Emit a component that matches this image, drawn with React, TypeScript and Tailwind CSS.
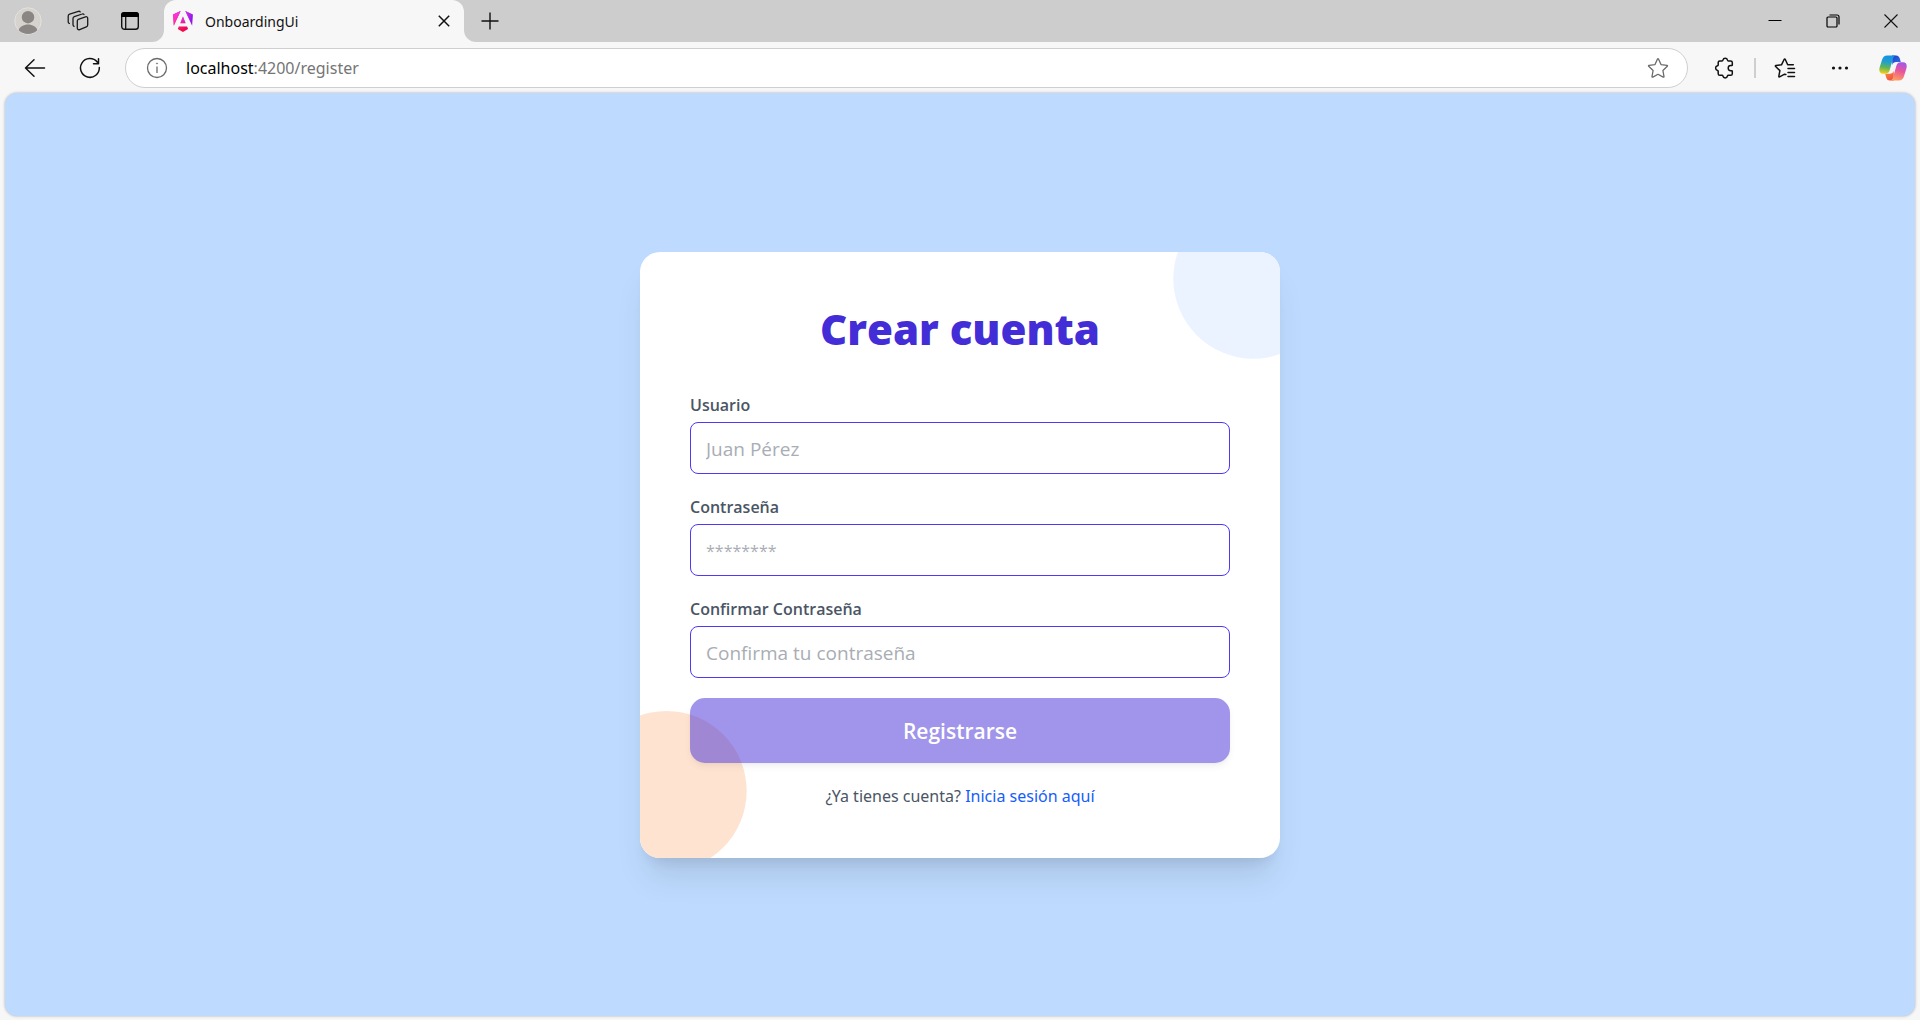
import type { ReactNode } from "react";

function ProfileIcon() {
  return (
    <svg width="28" height="28" viewBox="0 0 28 28">
      <defs>
        <clipPath id="avatar">
          <circle cx="14" cy="14" r="13" />
        </clipPath>
      </defs>
      <circle cx="14" cy="14" r="13.2" fill="#d6d3cf" stroke="#e4e2de" />
      <circle cx="14" cy="10.2" r="6.2" fill="#8a8684" />
      <path d="M4 24.5c1.5-5 5.500-7 10-7s8.500 2 10 7c-2.500 2.200-6 3-10 3s-7.500-.8-10-3Z" fill="#8a8684" clipPath="url(#avatar)" />
    </svg>
  );
}

function WorkspacesIcon() {
  return (
    <svg width="22" height="22" viewBox="0 0 22 22" fill="none" stroke="#1b1b1b" strokeWidth="1.300" strokeLinejoin="round" strokeLinecap="round">
      <path d="M11.300 9.300l7.200-2.500c1.200-.4 2.200.3 2.200 1.500v6.700c0 .9-.5 1.600-1.400 1.900l-6.600 2.700c-1.300.5-2.400-.2-2.400-1.500v-7c0-.9.300-1.500 1-1.800Z" />
      <path d="M17 4.500c-.4-.6-1-.8-1.800-.5L7.300 6.700c-.9.300-1.300.9-1.300 1.800v6.300c0 .8.300 1.300 1 1.600" />
      <path d="M13.200 1.900c-.4-.6-1-.8-1.800-.6L2.600 4.100c-.9.300-1.400 1-1.400 1.900v5.700c0 .9.400 1.500 1.200 1.800" />
    </svg>
  );
}

function TabActionsIcon() {
  return (
    <svg width="20" height="20" viewBox="0 0 20 20" fill="none">
      <rect x="1.700" y="1.700" width="16.600" height="16.600" rx="2.800" stroke="#111" strokeWidth="1.400" />
      <path d="M1 6V4a3 3 0 0 1 3-3h12a3 3 0 0 1 3 3v2Z" fill="#000" />
      <path d="M5.700 6v12" stroke="#111" strokeWidth="1.300" />
    </svg>
  );
}

function AngularIcon() {
  return (
    <svg width="20" height="21" viewBox="0 0 223 236">
      <defs>
        <linearGradient id="ngA" x1="49" y1="226" x2="218" y2="68" gradientUnits="userSpaceOnUse">
          <stop stopColor="#E40035" />
          <stop offset=".24" stopColor="#F60A48" />
          <stop offset=".35" stopColor="#F20755" />
          <stop offset=".49" stopColor="#DC087D" />
          <stop offset=".75" stopColor="#9717E7" />
          <stop offset="1" stopColor="#6C00F5" />
        </linearGradient>
        <linearGradient id="ngB" x1="41" y1="28" x2="156" y2="175" gradientUnits="userSpaceOnUse">
          <stop stopColor="#FF31D9" />
          <stop offset="1" stopColor="#FF5BE1" stopOpacity="0" />
        </linearGradient>
      </defs>
      {["url(#ngA)", "url(#ngB)"].map((fill) => (
        <path
          key={fill}
          fill={fill}
          d="m222.077 39.192-8.019 125.923L137.387 0l84.690 39.192Zm-53.105 162.825-57.933 33.056-57.934-33.056 11.783-28.556h92.301l11.783 28.556ZM111.039 62.675l30.357 73.803H80.681l30.358-73.803ZM7.937 165.115 0 39.192 84.690 0 7.937 165.115Z"
        />
      ))}
    </svg>
  );
}

function StarOutline() {
  return (
    <svg width="22" height="22" viewBox="0 0 22 22" fill="none" stroke="#6b6b6b" strokeWidth="1.300" strokeLinejoin="round">
      <path d="M10.500 2q.5-.8 1 0l2.500 5.600 6 .8q.9.200.300.900l-4.400 4.200 1.100 6.100q0 .8-.8.500L11 17.300l-5.200 2.800q-.8.300-.8-.5l1.100-6.100L1.700 9.300q-.6-.7.300-.9l6-.8Z" />
    </svg>
  );
}

function PuzzleIcon() {
  return (
    <svg width="22" height="22" viewBox="0 0 22 22" fill="none" stroke="#111" strokeWidth="1.500" strokeLinejoin="round">
      <path d="M5.800 3.900h2.200c.5 0 .8-.3.900-.8.300-1.200 1.200-1.900 2.300-1.900s2 .7 2.300 1.900c.1.500.4.8.9.800h2.300c1 0 1.600.7 1.600 1.600v2.400q0 .6-.6.600h-1c-1.500 0-2.500 1.100-2.500 2.600s1 2.600 2.500 2.600h1q.6 0 .6.600v2.400c0 1-.7 1.600-1.600 1.600h-2.300c-.5 0-.8.300-.9.700-.3 1.200-1.200 1.900-2.300 1.900s-2-.7-2.300-1.900c-.1-.4-.4-.7-.9-.7H5.800c-1 0-1.600-.7-1.600-1.600v-2.400c0-.5-.3-.8-.7-.9-1.200-.3-1.900-1.200-1.900-2.300s.7-2 1.900-2.300c.4-.1.700-.4.700-.9V5.500c0-.9.600-1.600 1.600-1.600Z" />
    </svg>
  );
}

function FavoritesIcon() {
  return (
    <svg width="22" height="22" viewBox="0 0 22 22" fill="none" stroke="#111" strokeWidth="1.500" strokeLinejoin="round" strokeLinecap="round">
      <path d="M19.300 7.700h-5.600L11.300 2.500q-.6-1-1.200 0L7.500 7.800l-5.600.8q-.9.200-.3.900l4.300 4.100-1.100 5.700q0 .9.800.6l5-2.700 1.300.2" />
      <path d="M14 11.500h6.500M14 15.500h6.500M14 19.500h6.500" />
    </svg>
  );
}

function CopilotIcon() {
  return (
    <svg width="28" height="26" viewBox="0 0 28 26">
      <defs>
        <linearGradient id="cpBlue" x1="8" y1="0" x2="5" y2="19" gradientUnits="userSpaceOnUse">
          <stop stopColor="#1490e8" />
          <stop offset=".35" stopColor="#1f9fd0" />
          <stop offset=".65" stopColor="#5fb55a" />
          <stop offset="1" stopColor="#ffd012" />
        </linearGradient>
        <linearGradient id="cpPink" x1="23" y1="7" x2="17" y2="26" gradientUnits="userSpaceOnUse">
          <stop stopColor="#a056f0" />
          <stop offset=".45" stopColor="#e8559b" />
          <stop offset="1" stopColor="#ffa45a" />
        </linearGradient>
        <linearGradient id="cpNavy" x1="14" y1="0" x2="21" y2="8" gradientUnits="userSpaceOnUse">
          <stop stopColor="#1d3fc4" />
          <stop offset="1" stopColor="#2f6fe8" />
        </linearGradient>
        <linearGradient id="cpRed" x1="8" y1="17" x2="13" y2="26" gradientUnits="userSpaceOnUse">
          <stop stopColor="#f7883a" />
          <stop offset="1" stopColor="#ee4a4a" />
        </linearGradient>
      </defs>
      <path d="M13 .5h4c2.300 0 3.300 1.300 3.900 3.300l.9 3.200h-4.600c-2 0-3.200.8-3.900 3L13 .5Z" fill="url(#cpNavy)" />
      <path d="M15 25.500h-4c-2.300 0-3.300-1.300-3.900-3.300L6.200 18.700h4.600c2 0 3.200-.8 3.900-3l.3 9.800Z" fill="url(#cpRed)" />
      <path d="M8.500.5h8.200c-1.600.4-2.400 1.800-3 4l-3 10.500c-.7 2.500-1.800 3.800-4.300 3.800H4c-3.300 0-4.300-2.800-3.400-6.200L2.800 5.600C3.700 2.300 5.200.5 8.500.5Z" fill="url(#cpBlue)" />
      <path d="M19.500 25.500h-8.200c1.600-.4 2.400-1.800 3-4l3-10.500c.7-2.500 1.800-3.800 4.300-3.800H24c3.300 0 4.300 2.800 3.400 6.200l-2.200 7c-.9 3.300-2.400 5.100-5.700 5.100Z" fill="url(#cpPink)" />
    </svg>
  );
}

function IconButton({ label, className, children }: { label: string; className: string; children: ReactNode }) {
  return (
    <button type="button" aria-label={label} className={`flex shrink-0 items-center justify-center ${className}`}>
      {children}
    </button>
  );
}

function TabStrip() {
  return (
    <div className="flex h-[42px] text-[#111]">
      <div className="flex w-[164px] shrink-0 items-center rounded-br-xl bg-[#cdcdcd] pl-[14px]">
        <IconButton label="Perfil" className="w-7">
          <ProfileIcon />
        </IconButton>
        <IconButton label="Espacios de trabajo" className="ml-6 w-6">
          <WorkspacesIcon />
        </IconButton>
        <IconButton label="Acciones de pestañas" className="ml-7 w-6">
          <TabActionsIcon />
        </IconButton>
      </div>
      <div className="w-[300px] shrink-0 bg-[#cdcdcd]">
        <div className="flex h-full items-center rounded-t-xl bg-[#f7f7f7] pr-3 pl-[9px]">
          <AngularIcon />
          <span className="ml-3 flex-1 font-['Noto_Sans','Open_Sans',sans-serif] text-[14px]">OnboardingUi</span>
          <IconButton label="Cerrar pestaña" className="size-4">
            <svg width="12" height="12" viewBox="0 0 12 12" stroke="#111" strokeWidth="1.500">
              <path d="M.8.8l10.400 10.400M11.200.8.8 11.200" />
            </svg>
          </IconButton>
        </div>
      </div>
      <div className="flex flex-1 items-center rounded-bl-xl bg-[#cdcdcd]">
        <IconButton label="Nueva pestaña" className="ml-4 w-5">
          <svg width="18" height="18" viewBox="0 0 18 18" stroke="#111" strokeWidth="1.400">
            <path d="M9 .5v17M.5 9h17" />
          </svg>
        </IconButton>
        <div className="ml-auto flex h-full">
          <IconButton label="Minimizar" className="w-[58px]">
            <svg width="14" height="14" viewBox="0 0 14 14" stroke="#000">
              <path d="M.5 6.500h13" />
            </svg>
          </IconButton>
          <IconButton label="Restaurar" className="w-[58px]">
            <svg width="14" height="14" viewBox="0 0 14 14" fill="none" stroke="#000" strokeWidth="1.200">
              <rect x="1" y="3" width="10" height="10" rx="1" />
              <path d="M3.500 1h7.500a2 2 0 0 1 2 2v7.500" />
            </svg>
          </IconButton>
          <IconButton label="Cerrar" className="w-[58px]">
            <svg width="14" height="14" viewBox="0 0 14 14" stroke="#111" strokeWidth="1.100">
              <path d="M.5.5l13 13M13.500.5l-13 13" />
            </svg>
          </IconButton>
        </div>
      </div>
    </div>
  );
}

function Toolbar() {
  return (
    <div className="flex h-[51px] items-center pr-[13px] pl-6">
      <IconButton label="Atrás" className="w-[22px]">
        <svg width="22" height="20" viewBox="0 0 22 20" fill="none" stroke="#111" strokeWidth="1.500" strokeLinecap="round" strokeLinejoin="round">
          <path d="M20.500 10H1.500M10 1.800 1.500 10l8.500 8.200" />
        </svg>
      </IconButton>
      <IconButton label="Actualizar" className="ml-[33px] w-[22px]">
        <svg width="22" height="22" viewBox="0 0 22 22" fill="none" stroke="#111" strokeWidth="1.500" strokeLinecap="round" strokeLinejoin="round">
          <path d="M20.300 10.500a9.400 9.400 0 1 1-2.100-5.500l1.100 1.400M19.500 1.700v5h-5" />
        </svg>
      </IconButton>
      <div className="ml-6 flex h-10 flex-1 items-center rounded-full border border-[#cfcfcf] bg-white pr-[18px] pl-5">
        <IconButton label="Información del sitio" className="w-[22px]">
          <svg width="22" height="22" viewBox="0 0 22 22" fill="none" stroke="#6b6b6b" strokeWidth="1.300">
            <circle cx="11" cy="11" r="9.500" />
            <path d="M11 9.500v6.500" />
            <circle cx="11" cy="6.500" r=".6" fill="#6b6b6b" strokeWidth=".6" />
          </svg>
        </IconButton>
        <span className="ml-[18px] flex-1 font-['Noto_Sans','Open_Sans',sans-serif] text-[16px] text-[#757575]">
          <span className="text-black">localhost</span>:4200/register
        </span>
        <IconButton label="Agregar a favoritos" className="w-[22px]">
          <StarOutline />
        </IconButton>
      </div>
      <IconButton label="Extensiones" className="ml-[26px] w-[22px]">
        <PuzzleIcon />
      </IconButton>
      <span className="mx-[18px] h-5 w-0.5 bg-[#cfcfcf]" />
      <IconButton label="Favoritos" className="w-[22px]">
        <FavoritesIcon />
      </IconButton>
      <IconButton label="Configuración y más" className="ml-[33px] w-[22px]">
        <svg width="18" height="4" viewBox="0 0 18 4" fill="#111">
          <circle cx="2.500" cy="2" r="1.600" />
          <circle cx="9" cy="2" r="1.600" />
          <circle cx="15.500" cy="2" r="1.600" />
        </svg>
      </IconButton>
      <IconButton label="Copilot" className="ml-7 w-7">
        <CopilotIcon />
      </IconButton>
    </div>
  );
}

type FieldProps = { id: string; label: string; type: string; placeholder: string; placeholderSize?: string };

function Field({ id, label, type, placeholder, placeholderSize = "text-[19px]" }: FieldProps) {
  return (
    <div className="flex flex-col gap-[3px]">
      <label htmlFor={id} className="text-[16px] leading-[27px] font-semibold text-gray-600">
        {label}
      </label>
      <input
        id={id}
        type={type}
        placeholder={placeholder}
        className={`h-[52px] w-full rounded-lg border border-indigo-600 px-[15px] pt-0.5 outline-none placeholder:text-[#a9adb4] ${placeholderSize}`}
      />
    </div>
  );
}

function RegisterCard() {
  return (
    <div className="relative w-full max-w-[640px] overflow-hidden rounded-[20px] bg-white px-[50px] pt-[50px] pb-12 shadow-[0_25px_31px_-6px_rgb(0_0_0/0.1),0_10px_13px_-8px_rgb(0_0_0/0.1)]">
      <div className="absolute top-0 right-0 size-40 translate-x-1/3 -translate-y-1/3 rounded-full bg-[#eaf3ff]" />
      <div className="absolute -bottom-[13px] left-0 size-40 -translate-x-1/3 rounded-full bg-[#ffe3d1]" />
      <h1 className="relative mb-9 text-center text-[42px] leading-[54px] font-extrabold text-indigo-700">Crear cuenta</h1>
      <form className="relative flex flex-col gap-5">
        <Field id="usuario" label="Usuario" type="text" placeholder="Juan Pérez" />
        <Field id="clave" label="Contraseña" type="password" placeholder="********" placeholderSize="text-[16px]" />
        <Field id="confirmar" label="Confirmar Contraseña" type="password" placeholder="Confirma tu contraseña" />
        <button type="button" className="h-[65px] w-full rounded-[15px] bg-indigo-700 pt-[3px] text-[21px] font-semibold text-white opacity-50 shadow-md">
          Registrarse
        </button>
        <p className="text-center font-['Noto_Sans','Open_Sans',sans-serif] text-[16px] leading-[27px] text-gray-600">
          ¿Ya tienes cuenta?{" "}
          <a href="#login" className="text-blue-600">
            Inicia sesión aquí
          </a>
        </p>
      </form>
    </div>
  );
}

export default function App() {
  return (
    <div className="flex min-h-screen flex-col bg-[#f7f7f7] font-['Open_Sans','Noto_Sans',sans-serif]">
      <TabStrip />
      <Toolbar />
      <main className="mx-[5px] mb-1 flex flex-1 items-center justify-center rounded-xl bg-blue-200 shadow-[0_0_3px_rgb(0_0_0/0.3)]">
        <RegisterCard />
      </main>
    </div>
  );
}
